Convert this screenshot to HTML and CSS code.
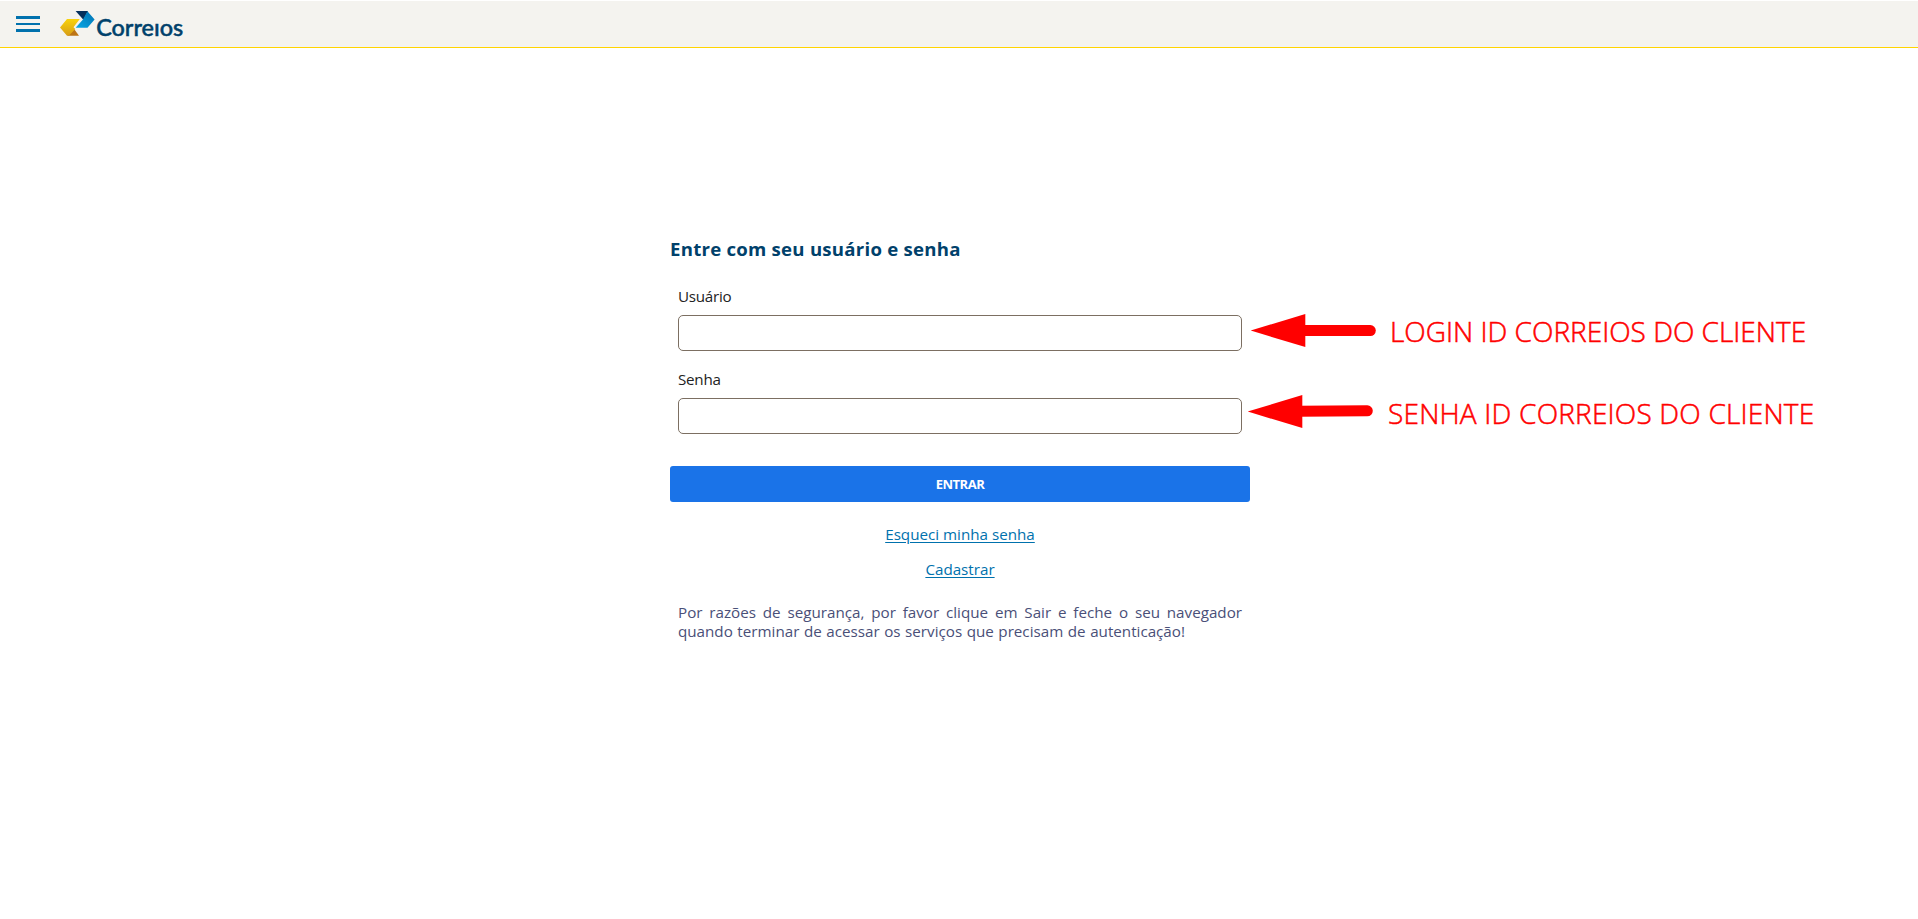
FILE: index.html
```html
<!DOCTYPE html>
<html lang="pt-BR">
<head>
<meta charset="utf-8">
<title>Correios</title>
<link rel="stylesheet" href="styles.css">
</head>
<body>
<header class="topbar">
  <button class="menu" aria-label="Menu"><span></span><span></span><span></span></button>
  <svg class="logo" width="128" height="34" viewBox="58 6 128 34" aria-label="Correios">
    <defs>
      <linearGradient id="gold" x1="0" y1="0" x2="0" y2="1"><stop offset="0" stop-color="#f8d30c"/><stop offset="1" stop-color="#d79d17"/></linearGradient>
      <linearGradient id="sky" x1="1" y1="0" x2="0" y2="1"><stop offset="0" stop-color="#0070b0"/><stop offset="1" stop-color="#08a8e6"/></linearGradient>
    </defs>
    <path fill="#bd7415" d="M73 27.5 79 35.8H67.5z"/>
    <path fill="url(#gold)" d="M60 27.6 67 19H79.8L73.5 27.2 75.3 29 68.8 35.8H67z"/>
    <path fill="#04305c" d="M75.6 11H88L83.6 20z"/>
    <path fill="url(#sky)" d="M87.4 11.2 94.6 19.6 87.5 27.8H75.6L83 19.4z"/>
    <text class="logo-word" x="96.2" y="35.6" textLength="87" lengthAdjust="spacingAndGlyphs">Correıos</text>
  </svg>
</header>
<main class="page">
  <form class="login">
    <h1 class="title">Entre com seu usuário e senha</h1>
    <div class="field">
      <label class="label" for="user">Usuário</label>
      <div class="control">
        <input class="input" id="user" type="text">
        <div class="note note-user">
          <svg class="arrow" width="126" height="34" viewBox="0 0 126 34"><path fill="red" d="M.7 16.6 55.3 0V33z"/><path stroke="red" stroke-width="11" stroke-linecap="round" d="M52 16.6H120.3"/></svg>
          <span class="note-text">LOGIN ID CORREIOS DO CLIENTE</span>
        </div>
      </div>
    </div>
    <div class="field">
      <label class="label" for="pass">Senha</label>
      <div class="control">
        <input class="input" id="pass" type="password">
        <div class="note note-pass">
          <svg class="arrow" width="126" height="34" viewBox="0 0 126 34"><path fill="red" d="M.7 16.6 55.3 0V33z"/><path stroke="red" stroke-width="11" stroke-linecap="round" d="M52 16.2 120.3 15.8"/></svg>
          <span class="note-text">SENHA ID CORREIOS DO CLIENTE</span>
        </div>
      </div>
    </div>
    <button class="submit" type="button">ENTRAR</button>
    <a class="link link-forgot" href="#">Esqueci minha senha</a>
    <a class="link link-signup" href="#">Cadastrar</a>
    <p class="notice">Por razões de segurança, por favor clique em Sair e feche o seu navegador quando terminar de acessar os serviços que precisam de autenticação!</p>
  </form>
</main>
</body>
</html>
```
FILE: styles.css
```css
* { box-sizing: border-box; }
body { margin: 0; background: #fff; color: #222; font: 15.2px/19px "Open Sans", "Noto Sans", sans-serif; overflow: hidden; }
.topbar { display: flex; align-items: flex-start; height: 48px; padding: 5px 0 0 16px; background: #f4f3ef; border-top: 1px solid #fff; border-bottom: 1px solid #ffd400; }
.menu { display: flex; flex-direction: column; justify-content: space-between; width: 24px; height: 16px; margin: 10px 18px 0 0; padding: 0; border: 0; background: none; }
.menu span { height: 3px; background: #0071ad; }
.menu span:nth-child(2) { height: 2px; }
.logo { display: block; }
.logo-word { font: 500 22.5px "Lato", sans-serif; fill: #00416b; stroke: #00416b; stroke-width: .5; }
.page { display: flex; justify-content: center; padding-top: 189px; }
.login { display: flex; flex-direction: column; width: 580px; margin-left: 2px; }
.title { margin: 0; height: 49px; font-size: 18.6px; line-height: 24px; font-weight: 700; letter-spacing: .25px; color: #00416b; white-space: nowrap; }
.field { display: flex; flex-direction: column; height: 83px; padding: 0 8px; }
.label { height: 29px; line-height: 20px; letter-spacing: -.25px; }
.control { position: relative; height: 36px; }
.input { display: block; width: 100%; height: 36px; border: 1px solid #7c6f62; border-radius: 5px; background: #fff; }
.submit { height: 36px; margin-top: 14px; border: 0; border-radius: 3px; background: #1a73e8; color: #fff; font: 700 13px "Open Sans", sans-serif; letter-spacing: -.5px; }
.link { align-self: center; height: 35px; color: #0071ad; line-height: 22px; text-decoration: underline; text-underline-offset: 2px; }
.link-forgot { margin-top: 21px; }
.notice { margin: 10px 8px 0; color: #4a4f78; text-align: justify; word-spacing: .6px; }
.note { position: absolute; display: flex; align-items: flex-start; white-space: nowrap; }
.note-user { left: 572px; top: -1px; }
.note-pass { left: 569px; top: -3px; }
.note-text { color: red; font: 300 28px/34px "Open Sans", sans-serif; -webkit-text-stroke: .5px red; margin-left: 14px; }
.note-pass .note-text { margin-top: 1px; margin-left: 15px; letter-spacing: .2px; }
```
